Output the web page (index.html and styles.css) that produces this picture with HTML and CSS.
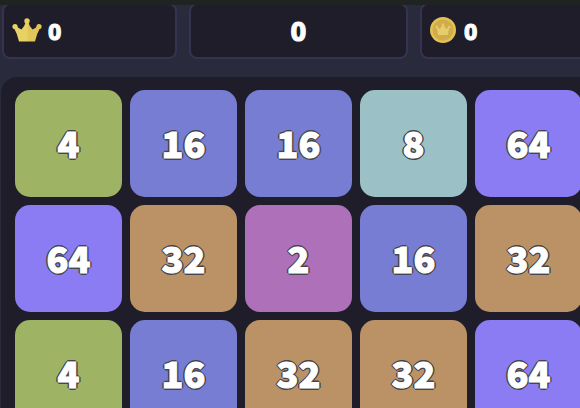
FILE: index.html
```
<!DOCTYPE html>
<html lang="en">
<head>
<meta charset="UTF-8">
<meta name="viewport" content="width=device-width, initial-scale=1.0">
<title>Number Tiles</title>
<link rel="stylesheet" href="styles.css">
</head>
<body>
<div class="top-bar"></div>
<main class="game">
    <header class="scores">
        <div class="score-box">
            <svg class="crown" viewBox="0 0 30 24" aria-hidden="true">
                <defs>
                    <linearGradient id="gold" x1="0" x2="1">
                        <stop offset="0" stop-color="#e8d466"/>
                        <stop offset="0.5" stop-color="#e8d162"/>
                        <stop offset="0.55" stop-color="#e3c659"/>
                        <stop offset="1" stop-color="#e2c457"/>
                    </linearGradient>
                </defs>
                <path d="M1.500 9 L4.500 8 Q7 11 9.500 11.500 Q12.500 9 13.700 4 H16.300 Q17.500 9 20.500 11.500 Q23 11 25.500 8 L28.500 9 Q25 15 23 23.500 H7 Q5 15 1.500 9 Z" fill="url(#gold)"/>
                <circle cx="3" cy="8.500" r="2.600" fill="#e8d466"/>
                <circle cx="15" cy="3" r="2.700" fill="#e6cd60"/>
                <circle cx="27" cy="8.500" r="2.600" fill="#e2c457"/>
            </svg>
            <span class="score">0</span>
        </div>
        <div class="score-box score-box-main">
            <span class="score score-main">0</span>
        </div>
        <div class="score-box">
            <svg class="coin" viewBox="0 0 26 26" aria-hidden="true">
                <circle cx="13" cy="13" r="13" fill="#e2c253"/>
                <circle cx="13" cy="13" r="10.500" fill="#d2ab4b"/>
                <path d="M6.500 9.500 L10 12 L12.500 7.500 H13.500 L16 12 L19.500 9.500 L17.800 18 H8.200 Z" fill="#e4cd6c"/>
                <g fill="#e4cd6c">
                    <circle cx="6.700" cy="10" r="1.200"/>
                    <circle cx="13" cy="7.500" r="1.200"/>
                    <circle cx="19.300" cy="10" r="1.200"/>
                </g>
            </svg>
            <span class="score score-coins">0</span>
        </div>
    </header>
    <section class="board">
        <div class="tile tile-4">4</div>
        <div class="tile tile-16">16</div>
        <div class="tile tile-16">16</div>
        <div class="tile tile-8">8</div>
        <div class="tile tile-64">64</div>

        <div class="tile tile-64">64</div>
        <div class="tile tile-32">32</div>
        <div class="tile tile-2">2</div>
        <div class="tile tile-16">16</div>
        <div class="tile tile-32">32</div>

        <div class="tile tile-4">4</div>
        <div class="tile tile-16">16</div>
        <div class="tile tile-32">32</div>
        <div class="tile tile-32">32</div>
        <div class="tile tile-64">64</div>
    </section>
</main>
</body>
</html>
```
FILE: styles.css
```
* {
    box-sizing: border-box;
}

body {
    font-family: 'Noto Sans CJK SC', 'Noto Sans', sans-serif;
    margin: 0;
    height: 100vh;
    overflow: hidden;
    background-color: #2a2a3d;
    color: white;
}

.top-bar {
    position: relative;
    z-index: 1;
    height: 5px;
    background-color: #1f2422;
}

/* the board is a little wider than the window */
.game {
    margin: -2px -15px 0 1px;
}

.scores {
    display: grid;
    grid-template-columns: 4fr 5fr 4fr;
    gap: 12px;
    margin-bottom: 18px;
    padding-left: 1px;
}

.score-box {
    display: flex;
    align-items: center;
    gap: 6px;
    height: 56px;
    padding: 0 8px 2px;
    background-color: #1e1d29;
    border: 2px solid #353350;
    border-radius: 8px;
}

.score-box-main {
    justify-content: center;
}

.score {
    font-size: 22px;
    font-weight: 900;
    line-height: 24px;
    -webkit-text-stroke: 1px white;
}

.score-main {
    font-size: 26px;
}

.score-coins {
    margin-left: 2px;
}

.crown {
    width: 30px;
    height: 24px;
}

.coin {
    width: 26px;
    height: 26px;
}

.board {
    display: grid;
    grid-template-columns: repeat(5, 1fr);
    gap: 8px;
    padding: 13px 13px 13px 14px;
    background-color: #1e1d29;
    border-radius: 16px;
}

.tile {
    display: flex;
    justify-content: center;
    align-items: center;
    aspect-ratio: 1;
    padding-bottom: 4px;
    border-radius: 15px;
    font-size: 36px;
    font-weight: 900;
    line-height: 40px;
    -webkit-text-stroke: 1px white;
    text-shadow: 2px 0 #45454d, -2px 0 #45454d, 0 2px #45454d, 0 -2px #45454d,
        1px 1px #45454d, -1px 1px #45454d, 1px -1px #45454d, -1px -1px #45454d;
}

.tile-2 {
    background-color: #ae70b8;
}

.tile-4 {
    background-color: #9fb365;
}

.tile-8 {
    background-color: #9bc1c6;
}

.tile-16 {
    background-color: #777dd2;
}

.tile-32 {
    background-color: #bb9266;
}

.tile-64 {
    background-color: #8b7cf4;
}
```
